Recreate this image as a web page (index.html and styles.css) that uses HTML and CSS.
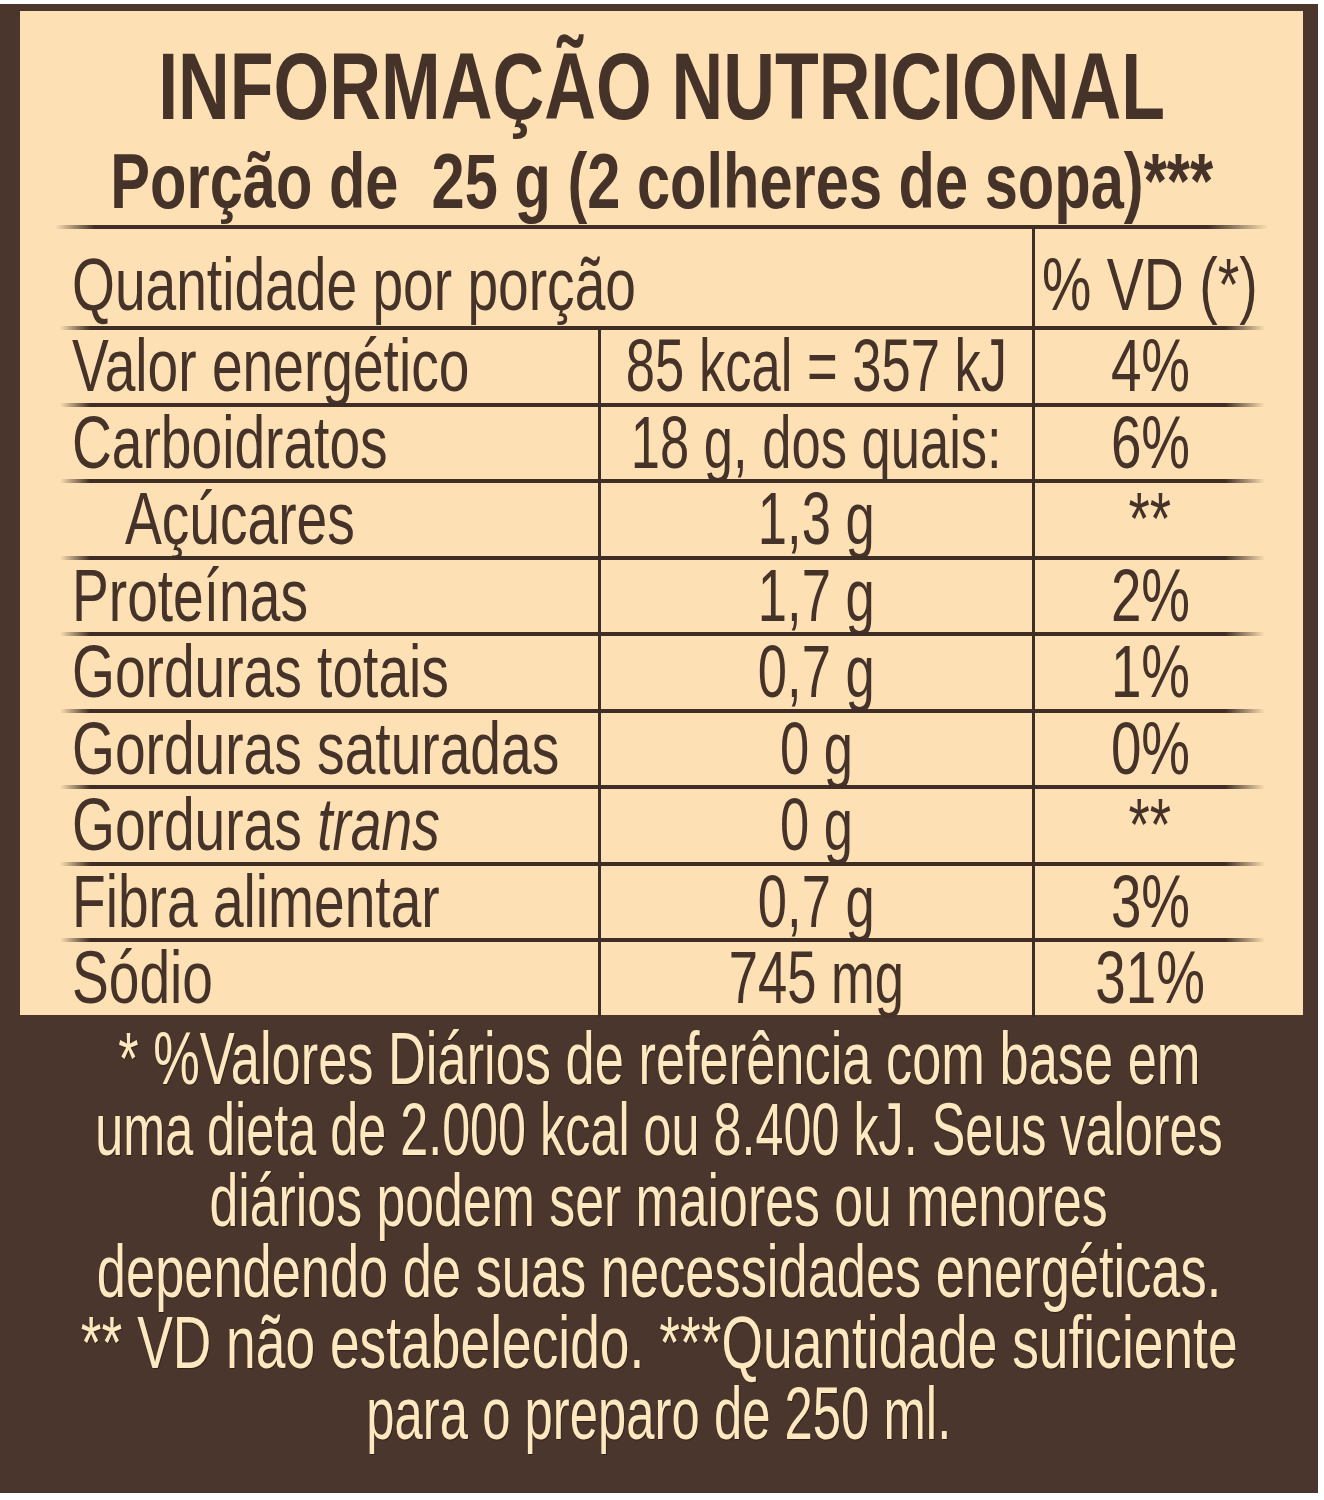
FILE: index.html
```html
<!DOCTYPE html>
<html lang="pt-BR">
<head>
<meta charset="utf-8">
<title>Informação Nutricional</title>
<link rel="stylesheet" href="styles.css">
</head>
<body>
<div class="label">
  <div class="panel">
    <h1 class="title"><span class="sx">INFORMAÇÃO NUTRICIONAL</span></h1>
    <p class="portion"><span class="sx">Porção de&nbsp; 25 g (2 colheres de sopa)***</span></p>
    <div class="rule"></div>
    <div class="table">
      <div class="row head">
        <div class="c1 wide"><span class="sx">Quantidade por porção</span></div>
        <div class="c3 vd"><span class="sx">% VD (*)</span></div>
      </div>
      <div class="row">
        <div class="c1"><span class="sx">Valor energético</span></div>
        <div class="c2"><span class="sx">85 kcal = 357 kJ</span></div>
        <div class="c3"><span class="sx">4%</span></div>
      </div>
      <div class="row">
        <div class="c1"><span class="sx">Carboidratos</span></div>
        <div class="c2"><span class="sx">18 g, dos quais:</span></div>
        <div class="c3"><span class="sx">6%</span></div>
      </div>
      <div class="row">
        <div class="c1 indent"><span class="sx">Açúcares</span></div>
        <div class="c2"><span class="sx">1,3 g</span></div>
        <div class="c3"><span class="sx">**</span></div>
      </div>
      <div class="row">
        <div class="c1"><span class="sx">Proteínas</span></div>
        <div class="c2"><span class="sx">1,7 g</span></div>
        <div class="c3"><span class="sx">2%</span></div>
      </div>
      <div class="row">
        <div class="c1"><span class="sx">Gorduras totais</span></div>
        <div class="c2"><span class="sx">0,7 g</span></div>
        <div class="c3"><span class="sx">1%</span></div>
      </div>
      <div class="row">
        <div class="c1"><span class="sx">Gorduras saturadas</span></div>
        <div class="c2"><span class="sx">0 g</span></div>
        <div class="c3"><span class="sx">0%</span></div>
      </div>
      <div class="row">
        <div class="c1"><span class="sx">Gorduras <em>trans</em></span></div>
        <div class="c2"><span class="sx">0 g</span></div>
        <div class="c3"><span class="sx">**</span></div>
      </div>
      <div class="row">
        <div class="c1"><span class="sx">Fibra alimentar</span></div>
        <div class="c2"><span class="sx">0,7 g</span></div>
        <div class="c3"><span class="sx">3%</span></div>
      </div>
      <div class="row last">
        <div class="c1"><span class="sx">Sódio</span></div>
        <div class="c2"><span class="sx">745 mg</span></div>
        <div class="c3"><span class="sx">31%</span></div>
      </div>
    </div>
  </div>
  <div class="notes">
    <p class="l1"><span class="sx">* %Valores Diários de referência com base em</span></p>
    <p class="l2"><span class="sx">uma dieta de 2.000 kcal ou 8.400 kJ. Seus valores</span></p>
    <p class="l3"><span class="sx">diários podem ser maiores ou menores</span></p>
    <p class="l4"><span class="sx">dependendo de suas necessidades energéticas.</span></p>
    <p class="l5"><span class="sx">** VD não estabelecido. ***Quantidade suficiente</span></p>
    <p class="l6"><span class="sx">para o preparo de 250 ml.</span></p>
  </div>
</div>
</body>
</html>
```

FILE: styles.css
```css
html, body {
  margin: 0;
  padding: 0;
  background: #ffffff;
}

body {
  font-family: "Liberation Sans", Arial, sans-serif;
  color: #45332a;
}

.label {
  width: 1318px;
  height: 1489px;
  margin-top: 4px;
  background: #4a362d;
  padding: 7px 15px 0 20px;
  box-sizing: border-box;
  display: flex;
  flex-direction: column;
}

.panel {
  width: 1283px;
  height: 1004px;
  flex: none;
  background: #fde0b4;
  padding-top: 26px;
  box-sizing: border-box;
}

.sx {
  display: block;
  flex: none;
  white-space: pre;
  transform-origin: center center;
}

.title {
  margin: 0;
  display: flex;
  justify-content: center;
  font-size: 94px;
  line-height: 100px;
  font-weight: 700;
  color: #45332a;
}

.title .sx {
  transform: scaleX(0.762);
}

.portion {
  margin: 0;
  display: flex;
  justify-content: center;
  font-size: 78px;
  line-height: 88px;
  font-weight: 700;
}

.portion .sx {
  transform: scaleX(0.764);
}

.rule {
  margin-left: 35px;
  width: 1213px;
  height: 4px;
  background: linear-gradient(to right, rgba(63, 46, 37, 0) 0, #3f2e25 40px, #3f2e25 calc(100% - 60px), rgba(63, 46, 37, 0) 100%);
}

.table {
  margin-left: 40px;
  width: 1205px;
  font-size: 74px;
  line-height: 76.5px;
}

.row {
  position: relative;
  display: grid;
  grid-template-columns: 538px 434px 233px;
  height: 76.5px;
}

.row::after {
  content: "";
  position: absolute;
  left: 0;
  right: 0;
  bottom: -2px;
  height: 4px;
  background: linear-gradient(to right, rgba(63, 46, 37, 0) 0, #3f2e25 30px, #3f2e25 calc(100% - 40px), rgba(63, 46, 37, 0) 100%);
}

.row.head {
  height: 99px;
}

.row.head > div {
  padding-top: 18px;
}

.row.last {
  height: 73px;
}

.row.last::after {
  display: none;
}

.row > div {
  display: flex;
  min-width: 0;
  white-space: nowrap;
}

.c1 {
  padding-left: 12px;
  justify-content: flex-start;
}

.c1 .sx {
  transform-origin: left center;
  transform: scaleX(0.745);
}

.c1.wide {
  grid-column: 1 / span 2;
}

.c1.indent {
  padding-left: 65px;
}

.c2 {
  justify-content: center;
  border-left: 3px solid #3f2e25;
}

.c2 .sx {
  transform: scaleX(0.71);
}

.c3 {
  justify-content: center;
  border-left: 3px solid #3f2e25;
}

.c3 .sx {
  transform: scaleX(0.74);
}

.c3.vd .sx {
  transform: scaleX(0.75);
}

.notes {
  flex: 1;
  padding-top: 8px;
  margin-left: -20px;
  margin-right: -15px;
  color: #fde8bf;
  font-size: 74px;
  line-height: 71px;
  text-shadow: 1px 1px 1px rgba(30, 20, 15, 0.6);
}

.notes p {
  margin: 0;
  height: 71px;
  display: flex;
  justify-content: center;
  white-space: nowrap;
}

.notes .sx {
  transform: scaleX(0.7);
}

.notes .l1 .sx {
  transform: scaleX(0.708);
}

.notes .l2 .sx {
  transform: scaleX(0.68);
}

.notes .l4 .sx {
  transform: scaleX(0.708);
}

.notes .l5 .sx {
  transform: scaleX(0.721);
}

.notes .l6 .sx {
  transform: scaleX(0.687);
}
```
